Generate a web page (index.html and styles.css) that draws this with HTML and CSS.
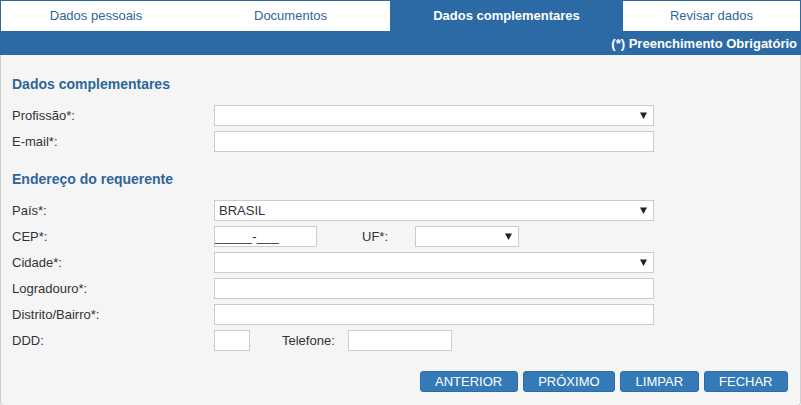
FILE: index.html
```html
<!DOCTYPE html>
<html lang="pt-BR">
<head>
<meta charset="utf-8">
<title>Dados complementares</title>
<link rel="stylesheet" href="styles.css">
</head>
<body>
<div class="wizard">
  <div class="tabs">
    <div class="tab t1">Dados pessoais</div>
    <div class="tab t2">Documentos</div>
    <div class="tab t3 active">Dados complementares</div>
    <div class="tab t4">Revisar dados</div>
  </div>
  <div class="bar">(*) Preenchimento Obrigatório</div>
  <div class="content">
    <h2 class="section first">Dados complementares</h2>
    <div class="row"><label>Profissão*:</label><div class="select wide"><span></span><svg width="7" height="7" viewBox="0 0 7 7"><path d="M0 0.5H7L3.5 7Z" fill="#222"/></svg></div></div>
    <div class="row"><label>E-mail*:</label><div class="input wide"></div></div>

    <h2 class="section">Endereço do requerente</h2>
    <div class="row"><label>País*:</label><div class="select wide"><span>BRASIL</span><svg width="7" height="7" viewBox="0 0 7 7"><path d="M0 0.5H7L3.5 7Z" fill="#222"/></svg></div></div>
    <div class="row"><label>CEP*:</label><div class="input cep"><span class="mask">_____-___</span></div><span class="sub uf">UF*:</span><div class="select ufsel"><span></span><svg width="7" height="7" viewBox="0 0 7 7"><path d="M0 0.5H7L3.5 7Z" fill="#222"/></svg></div></div>
    <div class="row"><label>Cidade*:</label><div class="select wide"><span></span><svg width="7" height="7" viewBox="0 0 7 7"><path d="M0 0.5H7L3.5 7Z" fill="#222"/></svg></div></div>
    <div class="row"><label>Logradouro*:</label><div class="input wide"></div></div>
    <div class="row"><label>Distrito/Bairro*:</label><div class="input wide"></div></div>
    <div class="row"><label>DDD:</label><div class="input ddd"></div><span class="sub tel">Telefone:</span><div class="input phone"></div></div>

    <div class="actions">
      <button class="btn">ANTERIOR</button>
      <button class="btn">PRÓXIMO</button>
      <button class="btn">LIMPAR</button>
      <button class="btn">FECHAR</button>
    </div>
  </div>
</div>
</body>
</html>
```
FILE: styles.css
```css
html, body {
  margin: 0;
  padding: 0;
  background: #ffffff;
}
body {
  font-family: "Liberation Sans", Arial, sans-serif;
  font-size: 13px;
  color: #333333;
}
.wizard {
  width: 801px;
}
.tabs {
  display: grid;
  grid-template-columns: 190px 199px 233px 1fr;
  height: 30px;
  border: 1px solid #2c6aa5;
  border-bottom: 0;
  background: #ffffff;
}
.tab {
  display: flex;
  align-items: center;
  justify-content: center;
  color: #2f659a;
  font-size: 13px;
  padding-bottom: 2px;
}
.tab.active {
  background: #2c6aa5;
  color: #ffffff;
  font-weight: bold;
}
.bar {
  height: 24px;
  background: #2c6aa5;
  color: #ffffff;
  font-weight: bold;
  font-size: 13px;
  text-align: right;
  padding-right: 4px;
  line-height: 25px;
}
.content {
  background: #f5f5f5;
  border: 1px solid #cfcfcf;
  border-top: 0;
  border-radius: 0 0 4px 4px;
  padding: 19px 12px 12px 11px;
  height: 319px;
}
.section {
  margin: 17px 0 11px;
  font-size: 14px;
  font-weight: bold;
  color: #2f659a;
  line-height: 20px;
  height: 20px;
}
.section.first {
  margin-top: 0;
}
.row {
  display: flex;
  align-items: center;
  height: 21px;
  margin-bottom: 5px;
}
.row label {
  width: 202px;
  flex: none;
}
.input, .select {
  box-sizing: border-box;
  height: 21px;
  background: #ffffff;
  border: 1px solid #cccccc;
  flex: none;
}
.select {
  display: flex;
  align-items: center;
  justify-content: space-between;
  padding: 0 6px 0 4px;
}
.select span {
  color: #333333;
}
.wide {
  width: 440px;
}
.cep {
  width: 103px;
  display: flex;
  align-items: center;
}
.mask {
  color: #333333;
  letter-spacing: 0.2px;
}
.sub {
  flex: none;
}
.uf {
  width: 53px;
  padding-left: 45px;
}
.ufsel {
  width: 104px;
}
.ddd {
  width: 36px;
}
.tel {
  width: 66px;
  padding-left: 32px;
}
.phone {
  width: 104px;
}
.actions {
  display: flex;
  justify-content: flex-end;
  gap: 5px;
  margin-top: 20px;
  padding-right: 0;
}
.btn {
  height: 21px;
  padding: 0 14.5px;
  border: 1px solid #2e6da4;
  border-radius: 3px;
  background: #337ab7;
  color: #ffffff;
  font-family: "Liberation Sans", Arial, sans-serif;
  font-size: 13px;
  font-weight: normal;
  line-height: 19px;
  cursor: pointer;
}
```
